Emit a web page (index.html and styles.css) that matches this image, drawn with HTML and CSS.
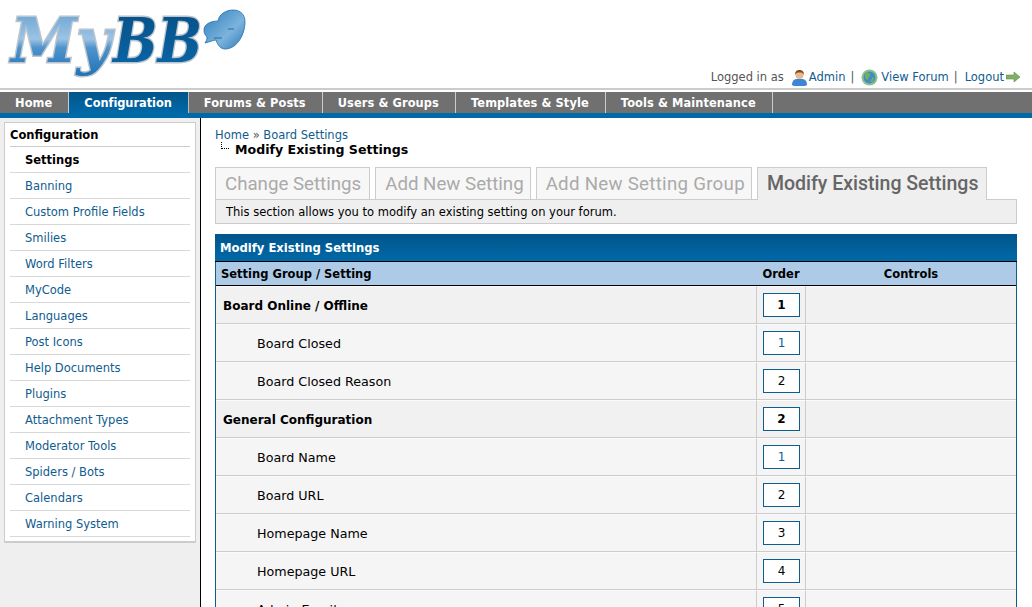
FILE: index.html
```html
<!DOCTYPE html>
<html lang="en">
<head>
<meta charset="utf-8">
<title>Modify Existing Settings</title>
<link rel="stylesheet" href="styles.css">
</head>
<body>
<header class="header">
  <svg class="logo" width="250" height="84" viewBox="0 0 250 84" aria-label="MyBB logo">
    <defs>
      <linearGradient id="my" x1="0" y1="0" x2="0" y2="1"><stop offset="0" stop-color="#5d9dd0"/><stop offset=".48" stop-color="#9cc3e4"/><stop offset=".6" stop-color="#4f93cc"/><stop offset="1" stop-color="#1f72b5"/></linearGradient>
      <linearGradient id="bb" x1="0" y1="0" x2="0" y2="1"><stop offset="0" stop-color="#074f84"/><stop offset="1" stop-color="#0a68ab"/></linearGradient>
      <linearGradient id="cl" x1="0" y1="0" x2="1" y2="1"><stop offset="0" stop-color="#2b7fbd"/><stop offset=".6" stop-color="#7db3dc"/><stop offset="1" stop-color="#2a7ab8"/></linearGradient>
    </defs>
    <text x="11" y="62" class="logo-t" fill="url(#my)" stroke="#bcc5cd" stroke-width="3" paint-order="stroke" textLength="100" lengthAdjust="spacingAndGlyphs">My</text>
    <text x="113" y="62" class="logo-t" fill="url(#bb)" stroke="#bcc5cd" stroke-width="3" paint-order="stroke" textLength="89" lengthAdjust="spacingAndGlyphs">BB</text>
    <path d="M204 30C204 24 211 21 218 21C219 14 226 10 233 10C241 10 245 15 245 22C245 33 238 49 225 49C221 49 218 46 216 40C213 40 210 42 205 43C207 40 207 38 207 37C205 35 204 33 204 30Z" fill="url(#cl)" stroke="#1f6ea9" stroke-width=".8"/>
    <path d="M228 29h6M214 38h8" stroke="#1f6ea9" stroke-width="1" fill="none"/>
  </svg>
  <div class="user">
    <span class="logged">Logged in as</span>
    <svg class="ic-user" width="15" height="17" viewBox="0 0 15 17"><path d="M0 16c0-4 2-6 5-6h5c3 0 5 2 5 6l-2 1H2z" fill="#3d86d6"/><circle cx="7.500" cy="6" r="4" fill="#e8b88e"/><path d="M3 6c0-4 2-5 4.500-5S12 2 12 6c-1-2-2-2.500-4.500-2.500S4 4 3 6z" fill="#8a4a1f"/></svg>
    <a href="#">Admin</a><span class="pipe">|</span>
    <svg class="ic-globe" width="17" height="17" viewBox="0 0 17 17"><circle cx="8.500" cy="8.500" r="8" fill="#8fbf8c"/><circle cx="8.500" cy="8.500" r="6" fill="#3d8fc4"/><path d="M5 4c2-1 4 0 4 2s-2 2-2 4-3 0-3-2 0-3 1-4zm7 4c1 1 1 4-1 5s-2-1-1-2 1-3 2-3z" fill="#79ad5e"/></svg>
    <a href="#">View Forum</a><span class="pipe">|</span>
    <a href="#" class="logout">Logout</a>
    <svg class="ic-arrow" width="15" height="10" viewBox="0 0 15 10"><path d="M0 3h8V0l6 5-6 5V7H0z" fill="#7fb069" stroke="#5d9046" stroke-width=".6"/></svg>
  </div>
</header>
<div class="rule"></div>
<nav class="menu">
  <a href="#">Home</a>
  <a href="#" class="on">Configuration</a>
  <a href="#">Forums &amp; Posts</a>
  <a href="#">Users &amp; Groups</a>
  <a href="#">Templates &amp; Style</a>
  <a href="#">Tools &amp; Maintenance</a>
</nav>
<div class="page">
  <aside class="side">
    <div class="sidebox">
      <div class="sidehead">Configuration</div>
      <a href="#" class="cur">Settings</a>
      <a href="#">Banning</a>
      <a href="#">Custom Profile Fields</a>
      <a href="#">Smilies</a>
      <a href="#">Word Filters</a>
      <a href="#">MyCode</a>
      <a href="#">Languages</a>
      <a href="#">Post Icons</a>
      <a href="#">Help Documents</a>
      <a href="#">Plugins</a>
      <a href="#">Attachment Types</a>
      <a href="#">Moderator Tools</a>
      <a href="#">Spiders / Bots</a>
      <a href="#">Calendars</a>
      <a href="#">Warning System</a>
    </div>
  </aside>
  <main class="main">
    <div class="crumb"><a href="#">Home</a> <span class="raquo">»</span> <a href="#">Board Settings</a></div>
    <div class="crumb2"><span class="elbow"></span><b>Modify Existing Settings</b></div>
    <div class="tabs">
      <a href="#">Change Settings</a>
      <a href="#" class="tight">Add New Setting</a>
      <a href="#" class="tight wide">Add New Setting Group</a>
      <a href="#" class="on">Modify Existing Settings</a>
    </div>
    <div class="desc">This section allows you to modify an existing setting on your forum.</div>
    <section class="panel">
      <div class="ptitle">Modify Existing Settings</div>
      <table class="grid">
        <thead><tr><th class="c1">Setting Group / Setting</th><th class="c2">Order</th><th class="c3">Controls</th></tr></thead>
        <tbody>
          <tr class="grp"><td class="c1">Board Online / Offline</td><td class="c2"><span class="ord">1</span></td><td class="c3"></td></tr>
          <tr><td class="c1">Board Closed</td><td class="c2"><span class="ord lnk">1</span></td><td class="c3"></td></tr>
          <tr><td class="c1">Board Closed Reason</td><td class="c2"><span class="ord">2</span></td><td class="c3"></td></tr>
          <tr class="grp"><td class="c1">General Configuration</td><td class="c2"><span class="ord">2</span></td><td class="c3"></td></tr>
          <tr><td class="c1">Board Name</td><td class="c2"><span class="ord lnk">1</span></td><td class="c3"></td></tr>
          <tr><td class="c1">Board URL</td><td class="c2"><span class="ord">2</span></td><td class="c3"></td></tr>
          <tr><td class="c1">Homepage Name</td><td class="c2"><span class="ord">3</span></td><td class="c3"></td></tr>
          <tr><td class="c1">Homepage URL</td><td class="c2"><span class="ord">4</span></td><td class="c3"></td></tr>
          <tr><td class="c1">Admin Email</td><td class="c2"><span class="ord">5</span></td><td class="c3"></td></tr>
        </tbody>
      </table>
    </section>
  </main>
</div>
</body>
</html>
```
FILE: styles.css
```css
* { box-sizing: border-box; }
html, body { margin: 0; height: 607px; overflow: hidden; background: #fff; }
body { font: 11.5px/14px "DejaVu Sans", Verdana, sans-serif; color: #000; }
a { color: #0f5c8e; text-decoration: none; }

.header { height: 88px; display: flex; justify-content: space-between; align-items: flex-end; padding: 0 11px 0 0; }
.logo { display: block; margin-bottom: 4px; }
.logo-t { font: italic bold 62px "DejaVu Serif", serif; }
.user { display: flex; align-items: center; height: 18px; margin-bottom: 2px; color: #555; }
.ic-user { margin: 0 2px 0 8px; }
.ic-globe { margin: 0 3px 0 0; }
.pipe { margin: 0 7px 0 5px; }
.ic-arrow { margin-left: 2px; }

.rule { height: 2px; background: #ccc; margin-bottom: 2px; }

.menu { height: 26px; display: flex; background: #707070; border-bottom: 5px solid #0069a8; font-size: 11.4px; letter-spacing: .1px; }
.menu a { color: #fff; font-weight: bold; height: 21px; line-height: 22px; padding: 0 16px 0 15px; border-right: 1px solid #ccc; background: #707070; }
.menu a.on { background: linear-gradient(#02558a, #0069a8); border-right-color: #bbb; letter-spacing: -.05px; }

.page { display: flex; height: 489px; }
.side { width: 201px; flex: none; background: #efefef; border-right: 1px solid #000; padding: 4px 4px 0; }
.sidebox { background: #fff; border: 1px solid #ccc; border-bottom-width: 2px; padding: 0 5px 4px; width: 192px; }
.sidehead { font-weight: bold; height: 24px; line-height: 23px; padding-top: 1px; border-bottom: 1px solid #ccc; }
.sidebox a { display: block; height: 26px; line-height: 26px; padding-left: 15px; border-bottom: 1px solid #d8d8d8; }
.sidebox a.cur { color: #000; font-weight: bold; }

.main { flex: 1; padding: 10px 15px 0 14px; min-width: 0; }
.crumb { height: 14px; line-height: 14px; }
.raquo { color: #555; }
.crumb2 { height: 14px; line-height: 15px; font-size: 12.6px; padding-left: 20px; position: relative; }
.elbow { position: absolute; left: 6px; top: 0; width: 8px; height: 7px; border-left: 1px dotted #000; border-bottom: 1px dotted #000; }

.tabs { display: flex; gap: 5px; margin-top: 11px; align-items: flex-end; position: relative; z-index: 1; }
.tabs a { height: 32px; padding: 0 8px 0 9px; border: 1px solid #ccc; border-bottom: 0; background: #f7f7f7; color: #aaa; white-space: nowrap; font: 18.7px/32px Roboto, sans-serif; }
.tabs a.tight { padding-right: 6px; }
.tabs a.wide { letter-spacing: .28px; }
.tabs a.on { height: 33px; background: #efefef; color: #666; font-weight: 500; font-size: 19.5px; margin-bottom: -1px; }

.desc { height: 25px; line-height: 24px; padding-left: 10px; background: #efefef; border: 1px solid #ccc; }

.panel { margin-top: 10px; border-left: 1px solid #0f5c8e; border-right: 1px solid #0f5c8e; }
.ptitle { height: 28px; margin: 0 -1px; padding-left: 5px; line-height: 28px; font-size: 11.6px; font-weight: bold; color: #fff; background: linear-gradient(#02558a, #0069a8); border-bottom: 1px solid #000; }

.grid { width: 100%; border-collapse: separate; border-spacing: 0; table-layout: fixed; }
.grid th { height: 24px; background: #adcbe6; border-bottom: 1px solid #000; font-size: 11.5px; padding: 1px 0 0; }
.grid th.c1 { text-align: left; padding-left: 5px; }
.grid td { height: 38px; padding: 0; background: #f5f5f5; border-top: 1px solid #fbfbfb; border-bottom: 1px solid #ccc; font-size: 12.7px; }
.grid .c2 { width: 50px; text-align: center; }
.grid .c3 { width: 210px; }
.grid td.c2 { border-left: 1px solid #ccc; border-right: 1px solid #ccc; padding-left: 1px; }
.grid td.c1 { padding: 2px 0 0 41px; }
.grid .grp td { background: #f1f1f1; font-weight: bold; }
.grid .grp td.c1 { padding-left: 7px; font-size: 12px; }
.ord { display: inline-block; width: 37px; height: 24px; line-height: 23px; background: #fff; border: 1px solid #0f5c8e; text-align: center; font-size: 12px; vertical-align: middle; }
.ord.lnk { color: #0f5c8e; }
```
